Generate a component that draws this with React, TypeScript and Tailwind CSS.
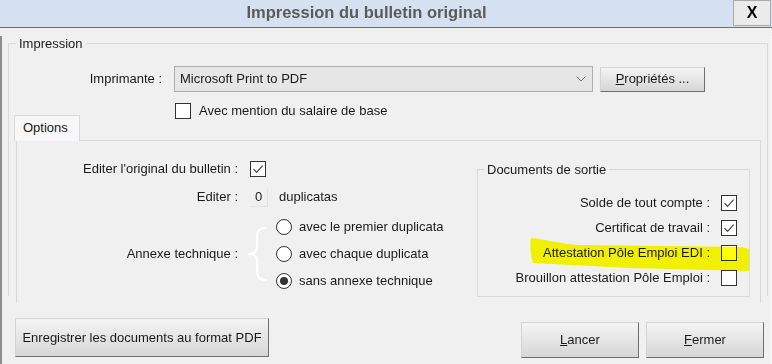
import React from "react";

function Check({ checked = false, className = "" }: { checked?: boolean; className?: string }) {
    return (
        <span className={`flex h-4 w-4 shrink-0 items-center justify-center border border-[#333] bg-white ${className}`}>
            {checked && (
                <svg width="12" height="12" viewBox="0 0 12 12">
                    <path d="M1.5 6.2 4.6 9.3 10.6 2.6" fill="none" stroke="#444" strokeWidth="1.2" />
                </svg>
            )}
        </span>
    );
}

function Radio({ selected = false }: { selected?: boolean }) {
    return (
        <span className="flex h-4 w-4 shrink-0 items-center justify-center rounded-full border border-[#333] bg-white">
            {selected && <span className="h-2 w-2 rounded-full bg-[#333]" />}
        </span>
    );
}

const btn =
    "flex items-center justify-center border border-t-[#d4d4d4] border-l-[#d4d4d4] border-r-[#6f6f6f] border-b-[#6f6f6f] bg-gradient-to-b from-[#f4f4f4] to-[#d6d6d6] text-[13px] text-[#1a1a1a]";

const docs = [
    { label: "Solde de tout compte :", checked: true },
    { label: "Certificat de travail :", checked: true },
    { label: "Attestation Pôle Emploi EDI :", checked: false },
    { label: "Brouillon attestation Pôle Emploi :", checked: false },
];

export default function App() {
    return (
        <div className="relative h-[364px] w-[772px] overflow-hidden bg-[#f0f0f0] font-['Liberation_Sans',Arial,sans-serif] text-[13px] text-[#1a1a1a]">
            {/* title bar */}
            <div className="flex h-[28px] border-b border-[#6e6e6e] bg-[#d5e1f0]">
                <div className="flex flex-1 items-center justify-center pb-[2px] text-[16.5px] font-bold text-[#5b5b5b]">
                    Impression du bulletin original
                </div>
                <div className="mr-[1px] flex h-[26px] w-[38px] items-center justify-center border border-[#a9a9a9] bg-[#ebebeb] text-[16px] font-bold text-black">
                    X
                </div>
            </div>

            <div className="h-[336px] border-l-2 border-r border-l-[#8c8c8c] border-r-[#fafafa]">
                {/* Impression group */}
                <fieldset className="ml-[6px] mt-[8px] h-[260px] w-[760px] border border-b-0 border-[#d9d9d9]">
                    <legend className="ml-[7px] px-[3px] leading-[15px]">Impression</legend>

                    <div className="mt-[15px] flex items-center">
                        <div className="w-[153px] text-right">Imprimante :</div>
                        <div className="ml-[12px] flex h-[26px] w-[419px] items-center justify-between border border-[#adadad] bg-[#e6e6e6] pl-[5px] pr-[6px]">
                            <span>Microsoft Print to PDF</span>
                            <svg width="10" height="6" viewBox="0 0 10 6">
                                <path d="M0.5 0.5 5 5 9.5 0.5" fill="none" stroke="#707070" strokeWidth="1" />
                            </svg>
                        </div>
                        <div className={`${btn} ml-[7px] h-[25px] w-[105px]`}>
                            <span>
                                <span className="underline">P</span>ropriétés ...
                            </span>
                        </div>
                    </div>

                    <div className="mt-[9px] flex items-center pl-[166px]">
                        <Check />
                        <span className="ml-[8px]">Avec mention du salaire de base</span>
                    </div>

                    {/* tab */}
                    <div className="relative z-10 ml-[5px] mt-[-6px] flex h-[26px] w-[66px] items-center border border-b-0 border-[#d9d9d9] bg-[#f7f7f7] pl-[8px]">
                        Options
                    </div>
                    <div className="ml-[7px] mt-[-1px] flex h-[163px] w-[745px] border border-b-0 border-[#d9d9d9]">
                        <div className="flex w-[460px] flex-col pt-[20px]">
                            <div className="flex h-[16px] items-center">
                                <div className="w-[221px] text-right">Editer l'original du bulletin :</div>
                                <Check checked className="ml-[12px]" />
                            </div>
                            <div className="mt-[11px] flex h-[19px] items-center">
                                <div className="w-[221px] text-right">Editer :</div>
                                <div className="ml-[12px] flex h-[19px] w-[18px] items-center justify-center border-r border-b border-[#e4e4e4]">
                                    0
                                </div>
                                <span className="ml-[11px]">duplicatas</span>
                            </div>
                            <div className="mt-[7px] flex items-center">
                                <div className="w-[221px] text-right">Annexe technique :</div>
                                <svg className="ml-[7px]" width="24" height="56" viewBox="0 0 24 56">
                                    <path
                                        d="M22 2 C13 2 12 6 12 12 L12 21 C12 26 9 28 3 28 C9 28 12 30 12 35 L12 44 C12 50 13 54 22 54"
                                        fill="none"
                                        stroke="#ffffff"
                                        strokeWidth="2.2"
                                    />
                                </svg>
                                <div className="ml-[7px] flex flex-col">
                                    {["avec le premier duplicata", "avec chaque duplicata", "sans annexe technique"].map(
                                        (t, i) => (
                                            <div key={t} className="flex h-[27px] items-center">
                                                <Radio selected={i === 2} />
                                                <span className="ml-[7px]">{t}</span>
                                            </div>
                                        ),
                                    )}
                                </div>
                            </div>
                        </div>

                        {/* Documents de sortie */}
                        <fieldset className="relative mt-[21px] h-[135px] w-[273px] border border-[#d9d9d9]">
                            <legend className="ml-[6px] px-[3px] leading-[16px]">Documents de sortie</legend>
                            <div className="mt-[13px] flex flex-col pr-[12px]">
                                {docs.map((d) => (
                                    <div key={d.label} className="flex h-[25px] items-center justify-end">
                                        <span className="mr-[11px]">{d.label}</span>
                                        <Check checked={d.checked} />
                                    </div>
                                ))}
                            </div>
                            <svg
                                className="pointer-events-none absolute left-[52px] top-[58px] mix-blend-multiply"
                                width="220"
                                height="36"
                                viewBox="0 0 220 36"
                            >
                                <path
                                    d="M1 2 C15 3 30 8 50 9 L212 11 L219 13 L219 35 L100 32 L3 27 C0 19 0 8 1 2 Z"
                                    fill="#ffff00"
                                />
                            </svg>
                        </fieldset>
                    </div>
                </fieldset>

                {/* bottom buttons */}
                <div className="mt-[22px] flex items-start pl-[13px]">
                    <div className={`${btn} h-[39px] w-[254px]`}>Enregistrer les documents au format PDF</div>
                    <div className={`${btn} ml-auto mt-[4px] h-[36px] w-[118px]`}>
                        <span>
                            <span className="underline">L</span>ancer
                        </span>
                    </div>
                    <div className={`${btn} ml-[7px] mr-[7px] mt-[4px] h-[36px] w-[118px]`}>
                        <span>
                            <span className="underline">F</span>ermer
                        </span>
                    </div>
                </div>
            </div>
        </div>
    );
}
